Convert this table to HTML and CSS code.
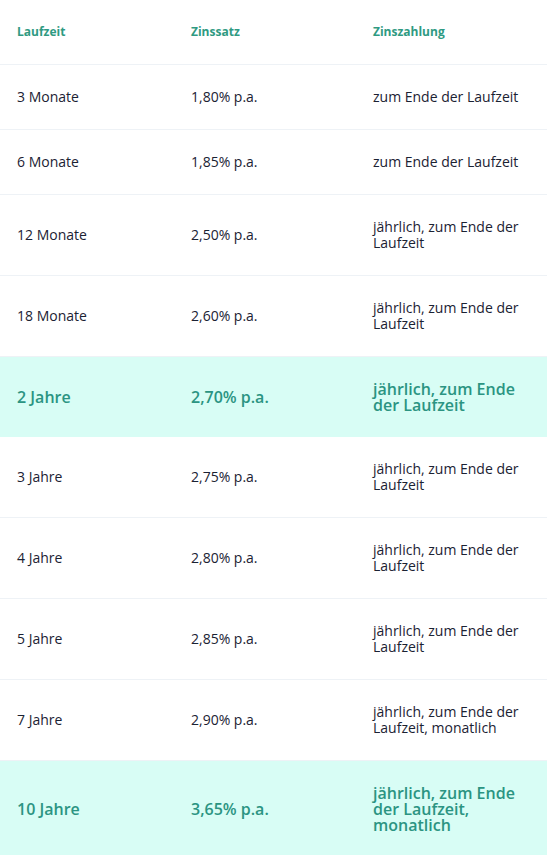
FILE: index.html
```html
<!DOCTYPE html>
<html lang="de">
<head>
<meta charset="utf-8">
<link rel="stylesheet" href="styles.css">
</head>
<body>
<table class="rates">
  <colgroup>
    <col class="c1"><col class="c2"><col class="c3">
  </colgroup>
  <thead>
    <tr><th>Laufzeit</th><th>Zinssatz</th><th>Zinszahlung</th></tr>
  </thead>
  <tbody>
    <tr><td>3 Monate</td><td>1,80% p.a.</td><td>zum Ende der Laufzeit</td></tr>
    <tr><td>6 Monate</td><td>1,85% p.a.</td><td>zum Ende der Laufzeit</td></tr>
    <tr><td>12 Monate</td><td>2,50% p.a.</td><td>jährlich, zum Ende der Laufzeit</td></tr>
    <tr><td>18 Monate</td><td>2,60% p.a.</td><td>jährlich, zum Ende der Laufzeit</td></tr>
    <tr class="hl"><td>2 Jahre</td><td>2,70% p.a.</td><td>jährlich, zum Ende der Laufzeit</td></tr>
    <tr><td>3 Jahre</td><td>2,75% p.a.</td><td>jährlich, zum Ende der Laufzeit</td></tr>
    <tr><td>4 Jahre</td><td>2,80% p.a.</td><td>jährlich, zum Ende der Laufzeit</td></tr>
    <tr><td>5 Jahre</td><td>2,85% p.a.</td><td>jährlich, zum Ende der Laufzeit</td></tr>
    <tr><td>7 Jahre</td><td>2,90% p.a.</td><td>jährlich, zum Ende der Laufzeit, monatlich</td></tr>
    <tr class="hl"><td>10 Jahre</td><td>3,65% p.a.</td><td>jährlich, zum Ende der Laufzeit, monatlich</td></tr>
  </tbody>
</table>
</body>
</html>
```
FILE: styles.css
```css
html, body {
  margin: 0;
  padding: 0;
  background: #ffffff;
}
body {
  font-family: "Open Sans", "Noto Sans", sans-serif;
  color: #1b2233;
}
.rates {
  width: 547px;
  border-collapse: collapse;
  table-layout: fixed;
}
.c1 { width: 174px; }
.c2 { width: 182px; }
.c3 { width: 191px; }
.rates th,
.rates td {
  text-align: left;
  vertical-align: middle;
  padding: 24px 16px 24px 17px;
  line-height: 16px;
  font-size: 14px;
  border-bottom: 1px solid #eef2f6;
}
.rates th {
  font-size: 12px;
  font-weight: 700;
  color: #2f9a82;
}
.rates tr.hl td {
  background: #d8fdf5;
  color: #2b9482;
  font-size: 16px;
  font-weight: 600;
  border-bottom: none;
}
```
